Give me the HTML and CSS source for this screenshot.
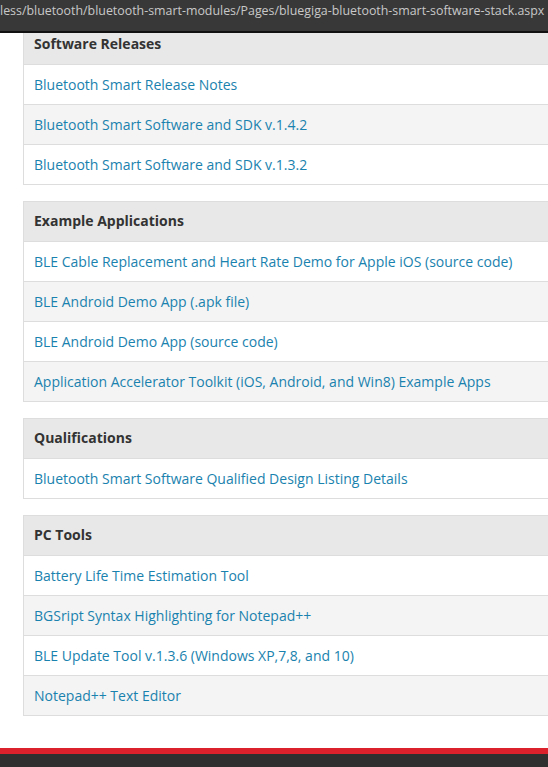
FILE: index.html
```html
<!DOCTYPE html>
<html>
<head>
<meta charset="utf-8">
<link rel="stylesheet" href="styles.css">
</head>
<body>
<div class="urlbar">less/bluetooth/bluetooth-smart-modules/Pages/bluegiga-bluetooth-smart-software-stack.aspx</div>
<main class="content">
  <section class="panel">
    <div class="panel-head">Software Releases</div>
    <a class="row" href="#">Bluetooth Smart Release Notes</a>
    <a class="row" href="#">Bluetooth Smart Software and SDK v.1.4.2</a>
    <a class="row" href="#">Bluetooth Smart Software and SDK v.1.3.2</a>
  </section>
  <section class="panel">
    <div class="panel-head">Example Applications</div>
    <a class="row" href="#">BLE Cable Replacement and Heart Rate Demo for Apple iOS (source code)</a>
    <a class="row" href="#">BLE Android Demo App (.apk file)</a>
    <a class="row" href="#">BLE Android Demo App (source code)</a>
    <a class="row" href="#">Application Accelerator Toolkit (iOS, Android, and Win8) Example Apps</a>
  </section>
  <section class="panel">
    <div class="panel-head">Qualifications</div>
    <a class="row" href="#">Bluetooth Smart Software Qualified Design Listing Details</a>
  </section>
  <section class="panel">
    <div class="panel-head">PC Tools</div>
    <a class="row" href="#">Battery Life Time Estimation Tool</a>
    <a class="row" href="#">BGSript Syntax Highlighting for Notepad++</a>
    <a class="row" href="#">BLE Update Tool v.1.3.6 (Windows XP,7,8, and 10)</a>
    <a class="row" href="#">Notepad++ Text Editor</a>
  </section>
</main>
<footer class="footer"></footer>
</body>
</html>
```
FILE: styles.css
```css
html, body {
  margin: 0;
  padding: 0;
  background: #fff;
  overflow: hidden;
}
body {
  font-family: "Open Sans", "Noto Sans", sans-serif;
  font-size: 14px;
  width: 548px;
  height: 767px;
  position: relative;
}
.urlbar {
  position: absolute;
  top: 0;
  left: 0;
  right: 0;
  height: 31px;
  background: #383838;
  border-bottom: 2px solid #111;
  color: #c8c8c8;
  font-size: 12.4px;
  line-height: 21px;
  white-space: nowrap;
  overflow: hidden;
  z-index: 2;
}
.content {
  padding: 24px 0 0 23px;
  display: flex;
  flex-direction: column;
  gap: 16px;
}
.panel {
  width: 560px;
  border: 1px solid #dddddd;
  display: flex;
  flex-direction: column;
}
.panel-head {
  height: 39px;
  line-height: 37px;
  padding: 0 10px;
  background: #e8e8e8;
  color: #333;
  font-weight: 700;
}
.row {
  display: block;
  height: 39px;
  line-height: 39px;
  padding: 0 10px;
  border-top: 1px solid #dddddd;
  color: #1a82ae;
  text-decoration: none;
  white-space: nowrap;
  background: #fff;
}
.row:nth-child(odd) {
  background: #f4f4f4;
}
.footer {
  position: absolute;
  left: 0;
  right: 0;
  top: 748px;
  height: 19px;
  border-top: 6px solid #db212b;
  background: #2f2f2f;
  box-sizing: border-box;
}
```
